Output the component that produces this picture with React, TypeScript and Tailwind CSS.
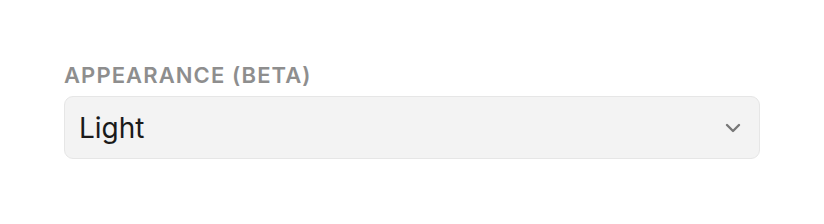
export default function App() {
  return (
    <div className="min-h-[224px] bg-white px-16 pt-[61px] font-['Inter',sans-serif]">
      <label className="block text-[22px] font-semibold uppercase leading-[29px] tracking-[0.05em] text-[#8e8e8e]">
        Appearance (Beta)
      </label>
      <div className="mt-[6px] flex h-[63px] w-[696px] items-center justify-between rounded-[9px] border border-[#e6e6e6] bg-[#f3f3f3] pl-[14px] pr-[18px]">
        <span className="text-[28px] text-[#1a1a1a]">Light</span>
        <svg width="16" height="10" viewBox="0 0 16 10" fill="none">
          <path d="M2 2l6 6 6-6" stroke="#777" strokeWidth="2.4" strokeLinecap="round" strokeLinejoin="round" />
        </svg>
      </div>
    </div>
  )
}
